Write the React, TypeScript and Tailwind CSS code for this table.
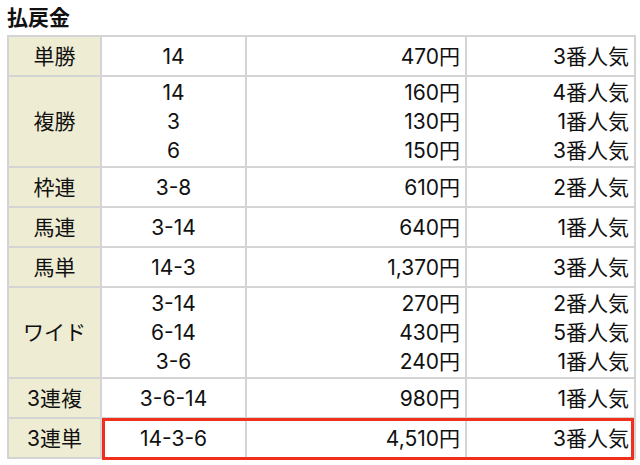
import React from 'react';

type Row = {
  label: string;
  items: { combo: string; payout: string; rank: string }[];
};

const rows: Row[] = [
  { label: '単勝', items: [{ combo: '14', payout: '470円', rank: '3番人気' }] },
  {
    label: '複勝',
    items: [
      { combo: '14', payout: '160円', rank: '4番人気' },
      { combo: '3', payout: '130円', rank: '1番人気' },
      { combo: '6', payout: '150円', rank: '3番人気' },
    ],
  },
  { label: '枠連', items: [{ combo: '3-8', payout: '610円', rank: '2番人気' }] },
  { label: '馬連', items: [{ combo: '3-14', payout: '640円', rank: '1番人気' }] },
  { label: '馬単', items: [{ combo: '14-3', payout: '1,370円', rank: '3番人気' }] },
  {
    label: 'ワイド',
    items: [
      { combo: '3-14', payout: '270円', rank: '2番人気' },
      { combo: '6-14', payout: '430円', rank: '5番人気' },
      { combo: '3-6', payout: '240円', rank: '1番人気' },
    ],
  },
  { label: '3連複', items: [{ combo: '3-6-14', payout: '980円', rank: '1番人気' }] },
  { label: '3連単', items: [{ combo: '14-3-6', payout: '4,510円', rank: '3番人気' }] },
];

const cell = 'border-2 border-[#d4d4d4] leading-[29px]';

export default function App() {
  return (
    <div
      className="w-[640px] h-[465px] bg-white text-[#111] px-[7px] pt-[5px]"
      style={{ fontFamily: 'Inter, "Noto Sans CJK JP", sans-serif' }}
    >
      <h2 className="text-[21px] font-bold leading-[26px] mb-[4px]">払戻金</h2>
      <div className="relative">
        <table className="border-collapse w-[627px] table-fixed text-[21px]">
          <colgroup>
            <col className="w-[93px]" />
            <col className="w-[145px]" />
            <col className="w-[220px]" />
            <col className="w-[169px]" />
          </colgroup>
          <tbody>
            {rows.map((row) => {
              const single = row.items.length === 1;
              return (
                <tr key={row.label} className={single ? 'h-[40px]' : 'h-[91px]'}>
                  <td className={`${cell} bg-[#eeecd3] text-center`}>{row.label}</td>
                  <td className={`${cell} text-center`}>
                    {row.items.map((it, i) => (
                      <div key={i}>{it.combo}</div>
                    ))}
                  </td>
                  <td className={`${cell} text-right pr-[5px]`}>
                    {row.items.map((it, i) => (
                      <div key={i}>{it.payout}</div>
                    ))}
                  </td>
                  <td className={`${cell} text-right pr-[5px]`}>
                    {row.items.map((it, i) => (
                      <div key={i}>{it.rank}</div>
                    ))}
                  </td>
                </tr>
              );
            })}
          </tbody>
        </table>
        {/* highlight box around the 3連単 result */}
        <div className="absolute left-[95px] right-[-1px] bottom-[-1px] h-[42px] border-[3px] border-[#f0301c] pointer-events-none" />
      </div>
    </div>
  );
}
